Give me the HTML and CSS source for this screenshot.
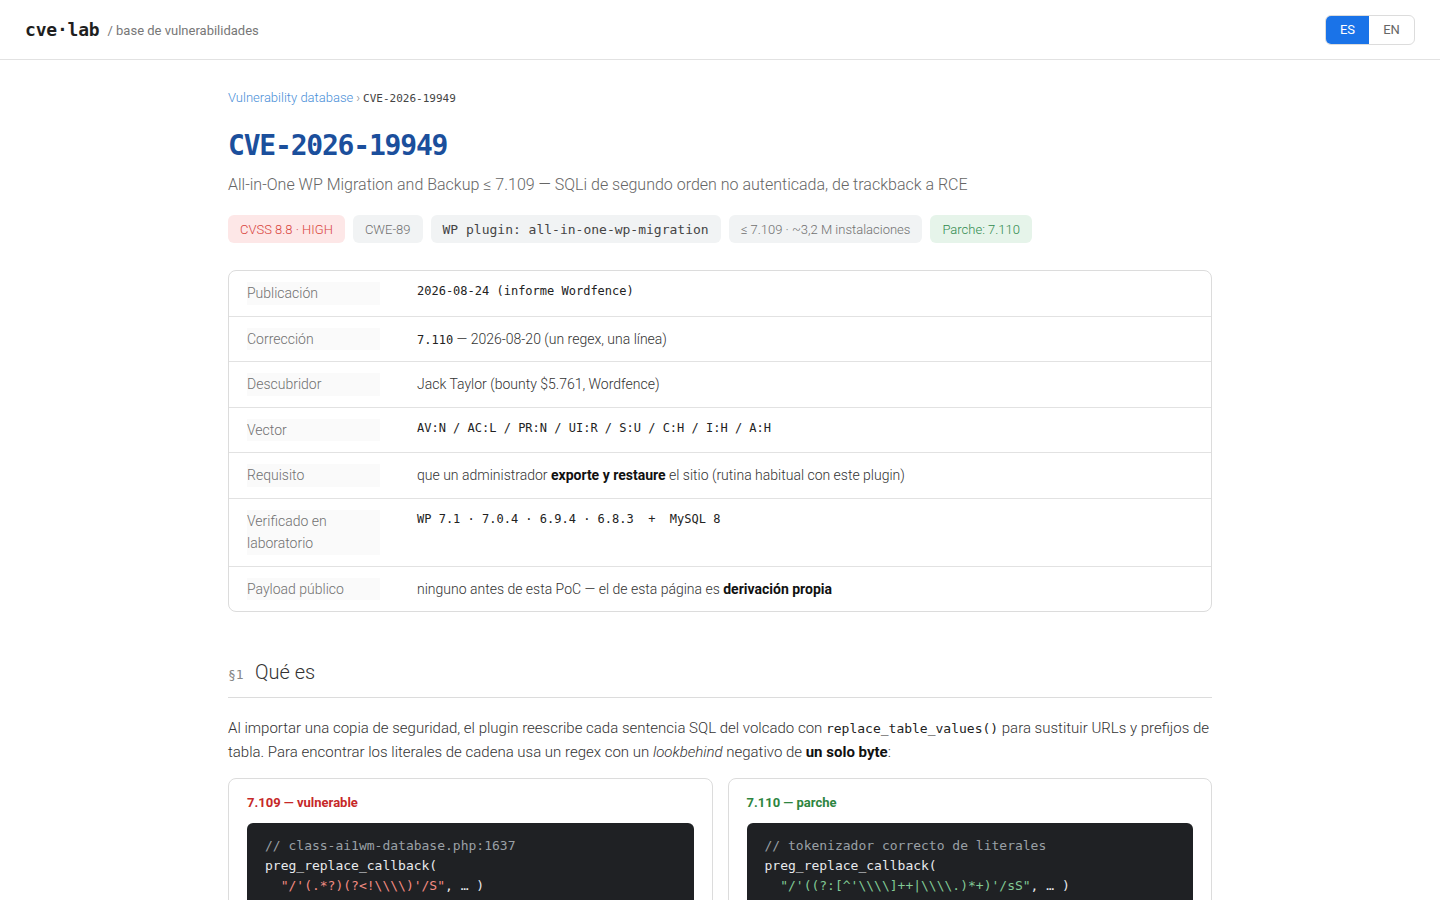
FILE: index.html
```html
<!DOCTYPE html>
<html lang="es">
<head>
<meta charset="utf-8">
<title>CVE-2026-19949 · cve·lab</title>
<link rel="stylesheet" href="styles.css">
</head>
<body>
<header class="topbar">
  <div class="brand">
    <span class="logo">cve·lab</span>
    <span class="tagline">/ base de vulnerabilidades</span>
  </div>
  <div class="lang">
    <span class="lang-btn active">ES</span>
    <span class="lang-btn">EN</span>
  </div>
</header>

<main class="page">
  <nav class="crumbs">
    <a href="#" class="crumb-link">Vulnerability database</a>
    <span class="crumb-sep">›</span>
    <span class="crumb-id">CVE-2026-19949</span>
  </nav>

  <h1 class="cve-title">CVE-2026-19949</h1>
  <p class="cve-sub">All-in-One WP Migration and Backup ≤ 7.109 — SQLi de segundo orden no autenticada, de trackback a RCE</p>

  <div class="badges">
    <span class="badge badge-red">CVSS 8.8 · HIGH</span>
    <span class="badge">CWE-89</span>
    <span class="badge badge-mono">WP plugin: all-in-one-wp-migration</span>
    <span class="badge">≤ 7.109 · ~3,2 M instalaciones</span>
    <span class="badge badge-green">Parche: 7.110</span>
  </div>

  <div class="facts">
    <div class="fact">
      <div class="fact-label">Publicación</div>
      <div class="fact-value"><code class="mono block">2026-08-24 (informe Wordfence)</code></div>
    </div>
    <div class="fact">
      <div class="fact-label">Corrección</div>
      <div class="fact-value"><code class="mono">7.110</code> — 2026-08-20 (un regex, una línea)</div>
    </div>
    <div class="fact">
      <div class="fact-label">Descubridor</div>
      <div class="fact-value">Jack Taylor (bounty $5.761, Wordfence)</div>
    </div>
    <div class="fact">
      <div class="fact-label">Vector</div>
      <div class="fact-value"><code class="mono block">AV:N / AC:L / PR:N / UI:R / S:U / C:H / I:H / A:H</code></div>
    </div>
    <div class="fact">
      <div class="fact-label">Requisito</div>
      <div class="fact-value">que un administrador <strong>exporte y restaure</strong> el sitio (rutina habitual con este plugin)</div>
    </div>
    <div class="fact">
      <div class="fact-label">Verificado en laboratorio</div>
      <div class="fact-value"><code class="mono block">WP 7.1 · 7.0.4 · 6.9.4 · 6.8.3  +  MySQL 8</code></div>
    </div>
    <div class="fact">
      <div class="fact-label">Payload público</div>
      <div class="fact-value">ninguno antes de esta PoC — el de esta página es <strong>derivación propia</strong></div>
    </div>
  </div>

  <section class="section">
    <h2 class="section-title"><span class="section-num">§1</span>Qué es</h2>
    <p class="para">Al importar una copia de seguridad, el plugin reescribe cada sentencia SQL del volcado con <code class="mono">replace_table_values()</code> para sustituir URLs y prefijos de tabla. Para encontrar los literales de cadena usa un regex con un <em>lookbehind</em> negativo de <strong>un solo byte</strong>:</p>

    <div class="compare">
      <div class="code-card">
        <div class="code-head head-red">7.109 — vulnerable</div>
<pre class="code"><span class="c-com">// class-ai1wm-database.php:1637</span>
preg_replace_callback(
  <span class="c-str-red">"/'(.*?)(?&lt;!\\\\)'/S"</span>, … )
$query = …;</pre>
      </div>
      <div class="code-card">
        <div class="code-head head-green">7.110 — parche</div>
<pre class="code"><span class="c-com">// tokenizador correcto de literales</span>
preg_replace_callback(
  <span class="c-str-green">"/'((?:[^'\\\\]++|\\\\.)*+)'/sS"</span>, … )
$query = …;</pre>
      </div>
    </div>
  </section>
</main>
</body>
</html>
```

FILE: styles.css
```css
* { box-sizing: border-box; }

body {
  margin: 0;
  font-family: Roboto, "Noto Sans", "Liberation Sans", sans-serif;
  font-weight: 300;
  color: #333;
  background: #fff;
}

.mono {
  font-family: "DejaVu Sans Mono", "Liberation Mono", monospace;
  font-weight: 400;
}

/* header */
.topbar {
  height: 60px;
  border-bottom: 1px solid #e2e2e2;
  padding: 0 25px;
  display: flex;
  align-items: center;
  justify-content: space-between;
}
.brand { display: flex; align-items: baseline; gap: 8px; }
.logo {
  font-family: "DejaVu Sans Mono", monospace;
  font-weight: 700;
  font-size: 18px;
  color: #1f1f1f;
  letter-spacing: -0.2px;
}
.tagline { font-size: 13px; color: #777; font-weight: 400; position: relative; top: -1px; }

.lang {
  display: flex;
  border: 1px solid #dcdcdc;
  border-radius: 6px;
  overflow: hidden;
  height: 30px;
}
.lang-btn {
  display: flex;
  align-items: center;
  justify-content: center;
  font-size: 13px;
  font-weight: 400;
  color: #666;
  width: 45px;
}
.lang-btn.active { background: #1a73e8; color: #fff; width: 43px; }

/* page */
.page {
  width: 984px;
  margin: 0 auto;
  padding-top: 29px;
  padding-bottom: 40px;
}

.crumbs { font-size: 13px; line-height: 18px; display: flex; align-items: baseline; gap: 3px; }
.crumb-link { color: #4a8fd8; text-decoration: none; }
.crumb-sep { color: #888; }
.crumb-id { font-family: "DejaVu Sans Mono", monospace; font-size: 11px; color: #444; }

.cve-title {
  margin: 20px 0 0;
  font-family: "DejaVu Sans Mono", monospace;
  font-weight: 700;
  font-size: 28px;
  line-height: 36px;
  letter-spacing: -1.2px;
  color: #1b4f9c;
}
.cve-sub {
  margin: 9px 0 0;
  font-size: 16px;
  line-height: 24px;
  color: #666;
}

.badges { display: flex; gap: 8px; margin-top: 18px; }
.badge {
  height: 28px;
  display: inline-flex;
  align-items: center;
  padding: 0 12px;
  border-radius: 6px;
  background: #f1f3f4;
  color: #707070;
  font-size: 13px;
}
.badge-red { background: #fde7e7; color: #d9453d; }
.badge-green { background: #e6f4ea; color: #2f8a4c; }
.badge-mono {
  font-family: "DejaVu Sans Mono", monospace;
  color: #444;
}

/* facts table */
.facts {
  margin-top: 27px;
  border: 1px solid #dcdcdc;
  border-radius: 8px;
}
.fact {
  display: grid;
  grid-template-columns: 133px 1fr;
  column-gap: 37px;
  padding: 11px 18px;
  font-size: 14px;
  line-height: 22.5px;
  border-top: 1px solid #e2e2e2;
  align-items: start;
}
.fact:first-child { border-top: 0; }
.fact-label { background: #fafafa; color: #717171; }
.fact-value { color: #333; }
.fact-value .mono { font-size: 12px; color: #222; white-space: pre; line-height: 1; }
.fact-value .mono.block { display: block; line-height: 18px; }
.fact-value strong { font-weight: 700; color: #111; }

/* section */
.section { margin-top: 46px; }
.section-title {
  margin: 0;
  font-size: 20px;
  font-weight: 300;
  line-height: 28px;
  color: #333;
  padding-bottom: 11px;
  border-bottom: 1px solid #dcdcdc;
  display: flex;
  align-items: baseline;
}
.section-num {
  font-family: "DejaVu Sans Mono", monospace;
  font-size: 13px;
  line-height: 1;
  color: #888;
  width: 27px;
}
.para {
  margin: 18px 0 0;
  font-size: 15px;
  line-height: 24px;
  color: #333;
}
.para .mono { font-size: 13px; color: #222; line-height: 1; }
.para strong { font-weight: 700; color: #111; }

.compare {
  margin-top: 14px;
  display: grid;
  grid-template-columns: 1fr 1fr;
  gap: 15px;
}
.code-card {
  border: 1px solid #dcdcdc;
  border-radius: 8px;
  padding: 15px 18px 18px;
}
.code-head {
  font-size: 13px;
  font-weight: 700;
  line-height: 18px;
}
.head-red { color: #c62828; }
.head-green { color: #2e8540; }

.code {
  margin: 11px 0 0;
  background: #1f2124;
  border-radius: 6px;
  padding: 13px 18px;
  font-family: "DejaVu Sans Mono", monospace;
  font-size: 13px;
  line-height: 20px;
  color: #e8eaed;
  white-space: pre;
  overflow: hidden;
}
.c-com { color: #9aa0a6; }
.c-str-red { color: #f28b82; }
.c-str-green { color: #81c995; }
```
